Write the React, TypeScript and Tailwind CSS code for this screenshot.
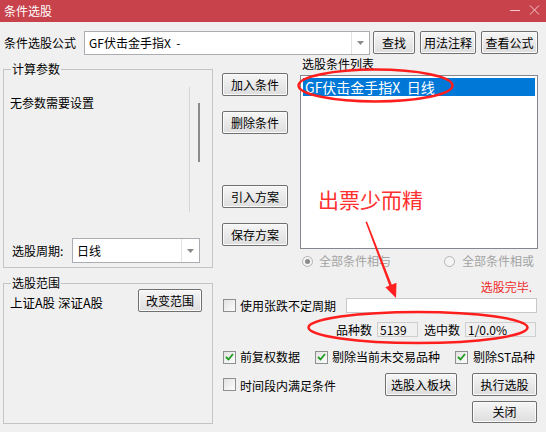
import React from "react";

function Btn({ children, className }: { children: React.ReactNode; className: string }) {
  return (
    <div
      className={
        "flex items-center justify-center border border-[#707070] rounded-[2px] bg-linear-to-b from-[#f6f6f6] to-[#dddddd] shadow-[inset_0_0_0_1px_#fbfbfb] text-[12px] leading-[16px] text-black shrink-0 " +
        className
      }
    >
      {children}
    </div>
  );
}

function Arrow() {
  return (
    <svg width="7" height="4" viewBox="0 0 7 4">
      <path d="M0 0 L7 0 L3.5 4 Z" fill="#8a8a8a" />
    </svg>
  );
}

function Combo({ text, className, textClass }: { text: string; className: string; textClass: string }) {
  return (
    <div className={"flex border border-[#abadb3] bg-white shrink-0 " + className}>
      <div className={"flex-1 flex items-center text-black whitespace-pre " + textClass}>{text}</div>
      <div className="w-[18px] border-l border-[#e3e3e3] flex items-center justify-center">
        <Arrow />
      </div>
    </div>
  );
}

function Check({ checked }: { checked?: boolean }) {
  return (
    <div className="w-[13px] h-[13px] border border-[#8e8f8f] bg-linear-to-br from-[#e2e2e2] to-[#fdfdfd] flex items-center justify-center shrink-0">
      {checked ? (
        <svg width="9" height="8" viewBox="0 0 9 8">
          <path d="M1 4 L3.5 6.5 L8 1" fill="none" stroke="#1d9b1d" strokeWidth="1.8" />
        </svg>
      ) : null}
    </div>
  );
}

function Radio({ checked }: { checked?: boolean }) {
  return (
    <div className="w-[11px] h-[11px] rounded-full border border-[#b4b4b4] bg-[#f4f4f4] flex items-center justify-center shrink-0">
      {checked ? <div className="w-[5px] h-[5px] rounded-full bg-[#8c8c8c]" /> : null}
    </div>
  );
}

export default function App() {
  return (
    <div className="relative w-[546px] h-[432px] overflow-hidden bg-[#f0f0f0] font-['Noto_Sans_CJK_SC','Microsoft_YaHei',sans-serif] text-[12px] leading-[16px] text-black">
      {/* title bar */}
      <div className="h-[22px] bg-[#c8424b] flex items-center justify-between pl-[4px] pr-[6px]">
        <span className="text-white text-[12px] leading-[16px]">条件选股</span>
        <svg width="30" height="12" viewBox="0 0 30 12" className="-mt-[3px]">
          <line x1="0" y1="6.5" x2="10" y2="6.5" stroke="#f4c9cd" strokeWidth="1" />
          <line x1="20" y1="1.5" x2="29" y2="10.5" stroke="#f4c9cd" strokeWidth="1" />
          <line x1="29" y1="1.5" x2="20" y2="10.5" stroke="#f4c9cd" strokeWidth="1" />
        </svg>
      </div>

      {/* formula row */}
      <div className="mt-[9px] flex items-start h-[24px]">
        <div className="ml-[4px] w-[80px] leading-[24px]">条件选股公式</div>
        <Combo text="GF伏击金手指X  -" className="w-[286px] h-[24px]" textClass="pl-[4px] text-[12px]" />
        <Btn className="ml-[3px] w-[42px] h-[23px]">查找</Btn>
        <Btn className="ml-[5px] w-[56px] h-[23px]">用法注释</Btn>
        <Btn className="ml-[5px] w-[57px] h-[23px]">查看公式</Btn>
      </div>

      {/* main */}
      <div className="flex">
        {/* left column */}
        <div className="ml-[3px] w-[210px] flex flex-col">
          <div className="relative mt-[14px] h-[199px] border border-[#c4c4c4]">
            <span className="absolute left-[7px] -top-[9px] px-[1px] bg-[#f0f0f0]">计算参数</span>
            <div className="mt-[17px] flex h-[125px]">
              <div className="w-[186px] border-r border-[#d6d6d6] pt-[8px] pl-[6px]">无参数需要设置</div>
              <div className="ml-[8px] mt-[16px] w-[2px] h-[59px] bg-[#8a8a8a]" />
            </div>
            <div className="mt-[26px] flex items-center">
              <div className="ml-[8px] w-[60px]">选股周期:</div>
              <Combo text="日线" className="w-[128px] h-[25px]" textClass="pl-[4px] text-[12px]" />
            </div>
          </div>
          <div className="relative mt-[15px] h-[141px] border border-[#c4c4c4]">
            <span className="absolute left-[7px] -top-[9px] px-[1px] bg-[#f0f0f0]">选股范围</span>
            <div className="mt-[5px] flex items-center">
              <div className="ml-[6px] pt-[4px] text-[12.5px]">上证A股 深证A股</div>
              <Btn className="ml-auto mr-[10px] w-[64px] h-[23px]">改变范围</Btn>
            </div>
          </div>
        </div>

        {/* right area */}
        <div className="ml-[9px] w-[316px] flex flex-col">
          <div className="flex">
            <div className="w-[66px] flex flex-col">
              <Btn className="mt-[18px] w-[66px] h-[23px]">加入条件</Btn>
              <Btn className="mt-[15px] w-[66px] h-[23px]">删除条件</Btn>
              <Btn className="mt-[51px] w-[66px] h-[23px]">引入方案</Btn>
              <Btn className="mt-[15px] w-[66px] h-[23px]">保存方案</Btn>
            </div>
            <div className="ml-[12px] w-[238px] flex flex-col">
              <div className="mt-[1px] pl-[2px]">选股条件列表</div>
              <div className="mt-[3px] h-[174px] border border-[#828790] bg-white p-[2px]">
                <div className="h-[18px] bg-[#0078d7] text-white text-[14px] leading-[18px] pl-[2px] whitespace-pre">GF伏击金手指X  日线</div>
              </div>
              <div className="mt-[5px] h-[14px] flex items-center text-[#a3a3a3]">
                <div className="ml-[2px]"><Radio checked /></div>
                <div className="ml-[6px]">全部条件相与</div>
                <div className="ml-[53px]"><Radio /></div>
                <div className="ml-[7px]">全部条件相或</div>
              </div>
              <div className="mt-[11px] h-[16px] text-right pr-[6px] text-[#ee2a2a]">选股完毕.</div>
            </div>
          </div>

          {/* bottom rows */}
          <div className="mt-[3px] h-[15px] flex items-center">
            <div className="ml-[1px]"><Check /></div>
            <div className="ml-[4px]">使用张跌不定周期</div>
            <div className="ml-auto mr-[1px] w-[191px] h-[15px] border border-[#c9c9c9] bg-white" />
          </div>
          <div className="mt-[9px] h-[15px] flex items-center justify-end">
            <div>品种数</div>
            <div className="ml-[5px] w-[41px] h-[15px] border border-[#cfcfcf] bg-[#f0f0f0] pl-[2px] flex items-center">5139</div>
            <div className="ml-[6px]">选中数</div>
            <div className="ml-[5px] mr-[2px] w-[71px] h-[15px] border border-[#cfcfcf] bg-[#f0f0f0] pl-[2px] flex items-center">1/0.0%</div>
          </div>
          <div className="mt-[13px] h-[14px] flex items-center">
            <div className="ml-[1px]"><Check checked /></div>
            <div className="ml-[4px]">前复权数据</div>
            <div className="ml-[15px]"><Check checked /></div>
            <div className="ml-[4px]">剔除当前未交易品种</div>
            <div className="ml-[15px]"><Check checked /></div>
            <div className="ml-[5px]">剔除ST品种</div>
          </div>
          <div className="mt-[9px] h-[23px] flex items-center">
            <div className="ml-[1px]"><Check /></div>
            <div className="ml-[4px] pt-[3px]">时间段内满足条件</div>
            <Btn className="ml-auto w-[72px] h-[23px]">选股入板块</Btn>
            <Btn className="ml-[15px] mr-[1px] w-[65px] h-[23px]">执行选股</Btn>
          </div>
          <div className="mt-[5px] flex justify-end">
            <Btn className="mr-[1px] w-[65px] h-[22px]">关闭</Btn>
          </div>
        </div>
      </div>

      {/* annotations */}
      <div className="absolute left-[318px] top-[186px] text-[21px] leading-[26px] text-[#ff3030]">出票少而精</div>
      <svg className="absolute inset-0 pointer-events-none" width="546" height="432" viewBox="0 0 546 432">
        <ellipse cx="375.5" cy="85.5" rx="77" ry="16" fill="none" stroke="#ff1e1e" strokeWidth="2.5" />
        <ellipse cx="418" cy="327.5" rx="109.5" ry="15.5" fill="none" stroke="#ff1e1e" strokeWidth="2.5" />
        <polygon points="365.5,222 367,221.6 392.2,285.8 389.6,286.6" fill="#ff2020" />
        <polygon points="396,298 385.3,287.2 396.5,282.8" fill="#ff2020" />
      </svg>
    </div>
  );
}
